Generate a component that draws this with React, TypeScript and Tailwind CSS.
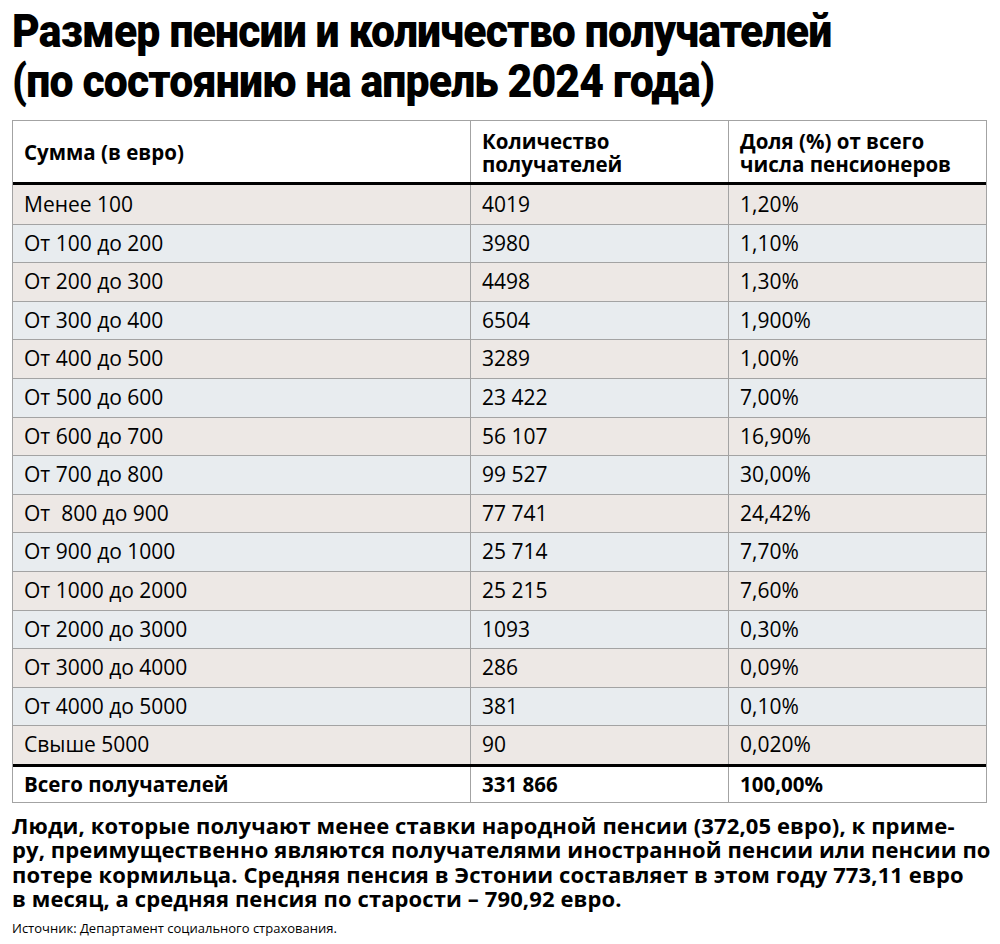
import React from "react";

const rows: [string, string, string][] = [
  ["Менее 100", "4019", "1,20%"],
  ["От 100 до 200", "3980", "1,10%"],
  ["От 200 до 300", "4498", "1,30%"],
  ["От 300 до 400", "6504", "1,900%"],
  ["От 400 до 500", "3289", "1,00%"],
  ["От 500 до 600", "23 422", "7,00%"],
  ["От 600 до 700", "56 107", "16,90%"],
  ["От 700 до 800", "99 527", "30,00%"],
  ["От  800 до 900", "77 741", "24,42%"],
  ["От 900 до 1000", "25 714", "7,70%"],
  ["От 1000 до 2000", "25 215", "7,60%"],
  ["От 2000 до 3000", "1093", "0,30%"],
  ["От 3000 до 4000", "286", "0,09%"],
  ["От 4000 до 5000", "381", "0,10%"],
  ["Свыше 5000", "90", "0,020%"],
];

export default function App() {
  return (
    <div className="w-[1000px] h-[944px] bg-white text-black overflow-hidden" style={{ fontFamily: "'Open Sans', 'Noto Sans', sans-serif" }}>
      <div className="pl-[12px] pt-[6px]">
        <h1 className="text-[46px] leading-[50px] font-black tracking-[-0.02em] origin-left scale-x-[0.93] whitespace-nowrap" style={{ fontFamily: "Roboto, sans-serif" }}>
          Размер пенсии и количество получателей
          <br />
          (по состоянию на апрель 2024 года)
        </h1>
      </div>
      <div className="ml-[12px] mt-[14px] w-[975px] border-[1.5px] border-[#a3a3a3] text-[21px]">
        <div className="grid grid-cols-[457px_258px_1fr] h-[64px] font-bold leading-[23px] border-b-[3px] border-black text-[20.5px]">
          <div className="flex items-center pl-[11px] pt-[1px]"><span>Сумма (в евро)</span></div>
          <div className="flex items-center pl-[11px] pt-[2px] border-l-[1.5px] border-[#a3a3a3]"><span>Количество<br />получателей</span></div>
          <div className="flex items-center pl-[11px] pt-[2px] border-l-[1.5px] border-[#a3a3a3]"><span>Доля (%) от всего<br />числа пенсионеров</span></div>
        </div>
        {rows.map((r, i) => (
          <div
            key={i}
            className={`grid grid-cols-[457px_258px_1fr] h-[38.6px] ${i > 0 ? "border-t-[1.5px] border-[#a3a3a3]" : ""} ${i % 2 === 0 ? "bg-[#ede8e5]" : "bg-[#e8ecef]"}`}
          >
            <div className="flex items-center pl-[11px] whitespace-pre">{r[0]}</div>
            <div className="flex items-center pl-[11px] border-l-[1.5px] border-[#a3a3a3]">{r[1]}</div>
            <div className="flex items-center pl-[11px] border-l-[1.5px] border-[#a3a3a3]">{r[2]}</div>
          </div>
        ))}
        <div className="grid grid-cols-[457px_258px_1fr] h-[38px] font-bold border-t-[3px] border-black text-[20.5px]">
          <div className="flex items-center pl-[11px]">Всего получателей</div>
          <div className="flex items-center pl-[11px] border-l-[1.5px] border-[#a3a3a3]">331 866</div>
          <div className="flex items-center pl-[11px] border-l-[1.5px] border-[#a3a3a3]">100,00%</div>
        </div>
      </div>
      <p className="ml-[12px] mt-[10px] text-[22px] leading-[24.5px] font-bold whitespace-nowrap tracking-[0.005em]">
        Люди, которые получают менее ставки народной пенсии (372,05 евро), к приме-
        <br />
        ру, преимущественно являются получателями иностранной пенсии или пенсии по
        <br />
        потере кормильца. Средняя пенсия в Эстонии составляет в этом году 773,11 евро
        <br />
        в месяц, а средняя пенсия по старости – 790,92 евро.
      </p>
      <p className="ml-[12px] mt-[9px] text-[13px] leading-[16px]">Источник: Департамент социального страхования.</p>
    </div>
  );
}
